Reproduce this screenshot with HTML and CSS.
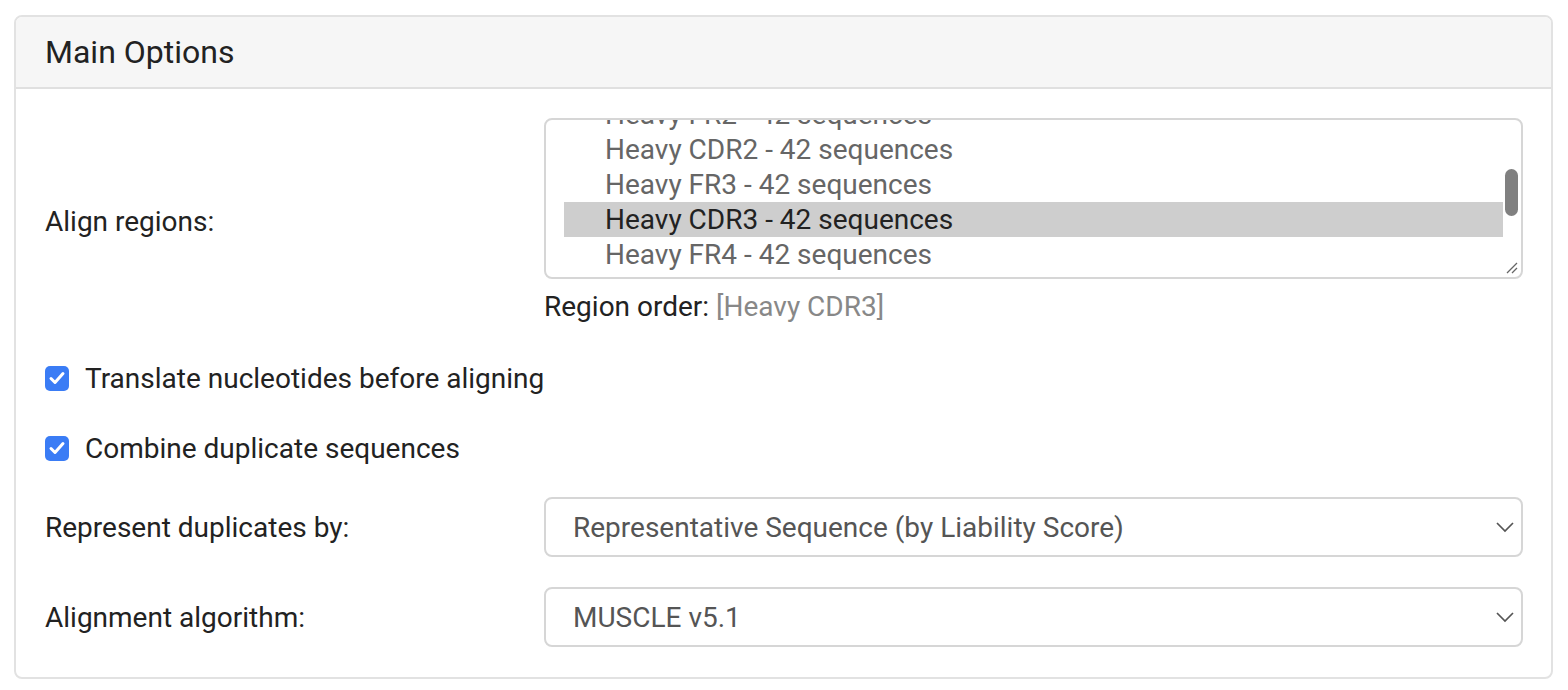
FILE: index.html
```html
<!DOCTYPE html>
<html>
<head>
<meta charset="utf-8">
<link rel="stylesheet" href="styles.css">
</head>
<body>
<div class="card">
  <div class="card-header">Main Options</div>
  <div class="card-body">
    <div class="row row-regions">
      <div class="label">Align regions:</div>
      <div class="field">
        <div class="listbox">
          <div class="list">
            <div class="opt">Heavy FR1 - 42 sequences</div>
            <div class="opt">Heavy CDR1 - 42 sequences</div>
            <div class="opt">Heavy FR2 - 42 sequences</div>
            <div class="opt">Heavy CDR2 - 42 sequences</div>
            <div class="opt">Heavy FR3 - 42 sequences</div>
            <div class="opt selected">Heavy CDR3 - 42 sequences</div>
            <div class="opt">Heavy FR4 - 42 sequences</div>
            <div class="opt">Light FR1 - 42 sequences</div>
          </div>
          <div class="thumb"></div>
          <svg class="grip" width="12" height="12" viewBox="0 0 12 12"><path d="M11 1 L1 11 M11 6 L6 11" stroke="#666" stroke-width="1.3" fill="none"/></svg>
        </div>
        <div class="order">Region order: <span class="order-val">[Heavy CDR3]</span></div>
      </div>
    </div>
    <label class="check-row row-check1">
      <span class="checkbox"><svg width="24" height="24" viewBox="0 0 24 24"><path d="M6 12.5 L10 16.5 L18 7.5" stroke="#fff" stroke-width="3" fill="none" stroke-linecap="round" stroke-linejoin="round"/></svg></span>
      <span>Translate nucleotides before aligning</span>
    </label>
    <label class="check-row row-check2">
      <span class="checkbox"><svg width="24" height="24" viewBox="0 0 24 24"><path d="M6 12.5 L10 16.5 L18 7.5" stroke="#fff" stroke-width="3" fill="none" stroke-linecap="round" stroke-linejoin="round"/></svg></span>
      <span>Combine duplicate sequences</span>
    </label>
    <div class="row row-select1">
      <div class="label">Represent duplicates by:</div>
      <div class="field">
        <div class="select">
          <span>Representative Sequence (by Liability Score)</span>
          <svg class="chev" width="20" height="12" viewBox="0 0 20 12"><path d="M2 2 L10 10 L18 2" stroke="#555" stroke-width="1.7" fill="none"/></svg>
        </div>
      </div>
    </div>
    <div class="row row-select2">
      <div class="label">Alignment algorithm:</div>
      <div class="field">
        <div class="select">
          <span>MUSCLE v5.1</span>
          <svg class="chev" width="20" height="12" viewBox="0 0 20 12"><path d="M2 2 L10 10 L18 2" stroke="#555" stroke-width="1.7" fill="none"/></svg>
        </div>
      </div>
    </div>
  </div>
</div>
</body>
</html>
```

FILE: styles.css
```css
html, body {
  margin: 0;
  padding: 0;
  background: #fff;
}
body {
  font-family: Roboto, "Liberation Sans", sans-serif;
  color: #222;
  font-size: 28px;
}
.card {
  margin: 15px 15px 0 14px;
  border: 2px solid #e2e2e2;
  border-radius: 8px;
  overflow: hidden;
}
.card-header {
  height: 70px;
  background: #f6f6f6;
  border-bottom: 2px solid #e0e0e0;
  display: flex;
  align-items: center;
  padding-left: 29px;
  font-size: 32px;
  color: #222;
}
.card-body {
  padding: 29px 28px 30px 29px;
  display: flex;
  flex-direction: column;
}
.row {
  display: flex;
  align-items: center;
}
.label {
  width: 499px;
  flex: none;
}
.field {
  flex: 1;
}
.listbox {
  position: relative;
  height: 157px;
  border: 2px solid #d6d6d6;
  border-radius: 8px;
  overflow: hidden;
}
.list {
  margin-top: -93px;
  padding-left: 18px;
  padding-right: 18px;
}
.opt {
  height: 35px;
  line-height: 35px;
  padding-left: 41px;
  color: #666;
  white-space: nowrap;
}
.opt.selected {
  background: #cecece;
  color: #222;
}
.thumb {
  position: absolute;
  right: 3px;
  top: 49px;
  width: 13px;
  height: 47px;
  border-radius: 7px;
  background: #808080;
}
.grip {
  position: absolute;
  right: 3px;
  bottom: 3px;
}
.order {
  margin-top: 10px;
  line-height: 35px;
}
.order-val {
  color: #888;
}
.check-row {
  display: flex;
  align-items: center;
  gap: 16px;
  height: 36px;
}
.row-check1 {
  margin-top: 36px;
}
.row-check2 {
  margin-top: 34px;
}
.checkbox {
  width: 24px;
  height: 25px;
  border-radius: 5px;
  background: #3a7cf5;
  display: flex;
  align-items: center;
  flex: none;
}
.row-select1 {
  margin-top: 31px;
}
.row-select2 {
  margin-top: 30px;
}
.select {
  box-sizing: border-box;
  height: 60px;
  border: 2px solid #d6d6d6;
  border-radius: 8px;
  display: flex;
  align-items: center;
  justify-content: space-between;
  padding: 0 6px 0 27px;
  color: #555;
}
.chev {
  flex: none;
}
```
